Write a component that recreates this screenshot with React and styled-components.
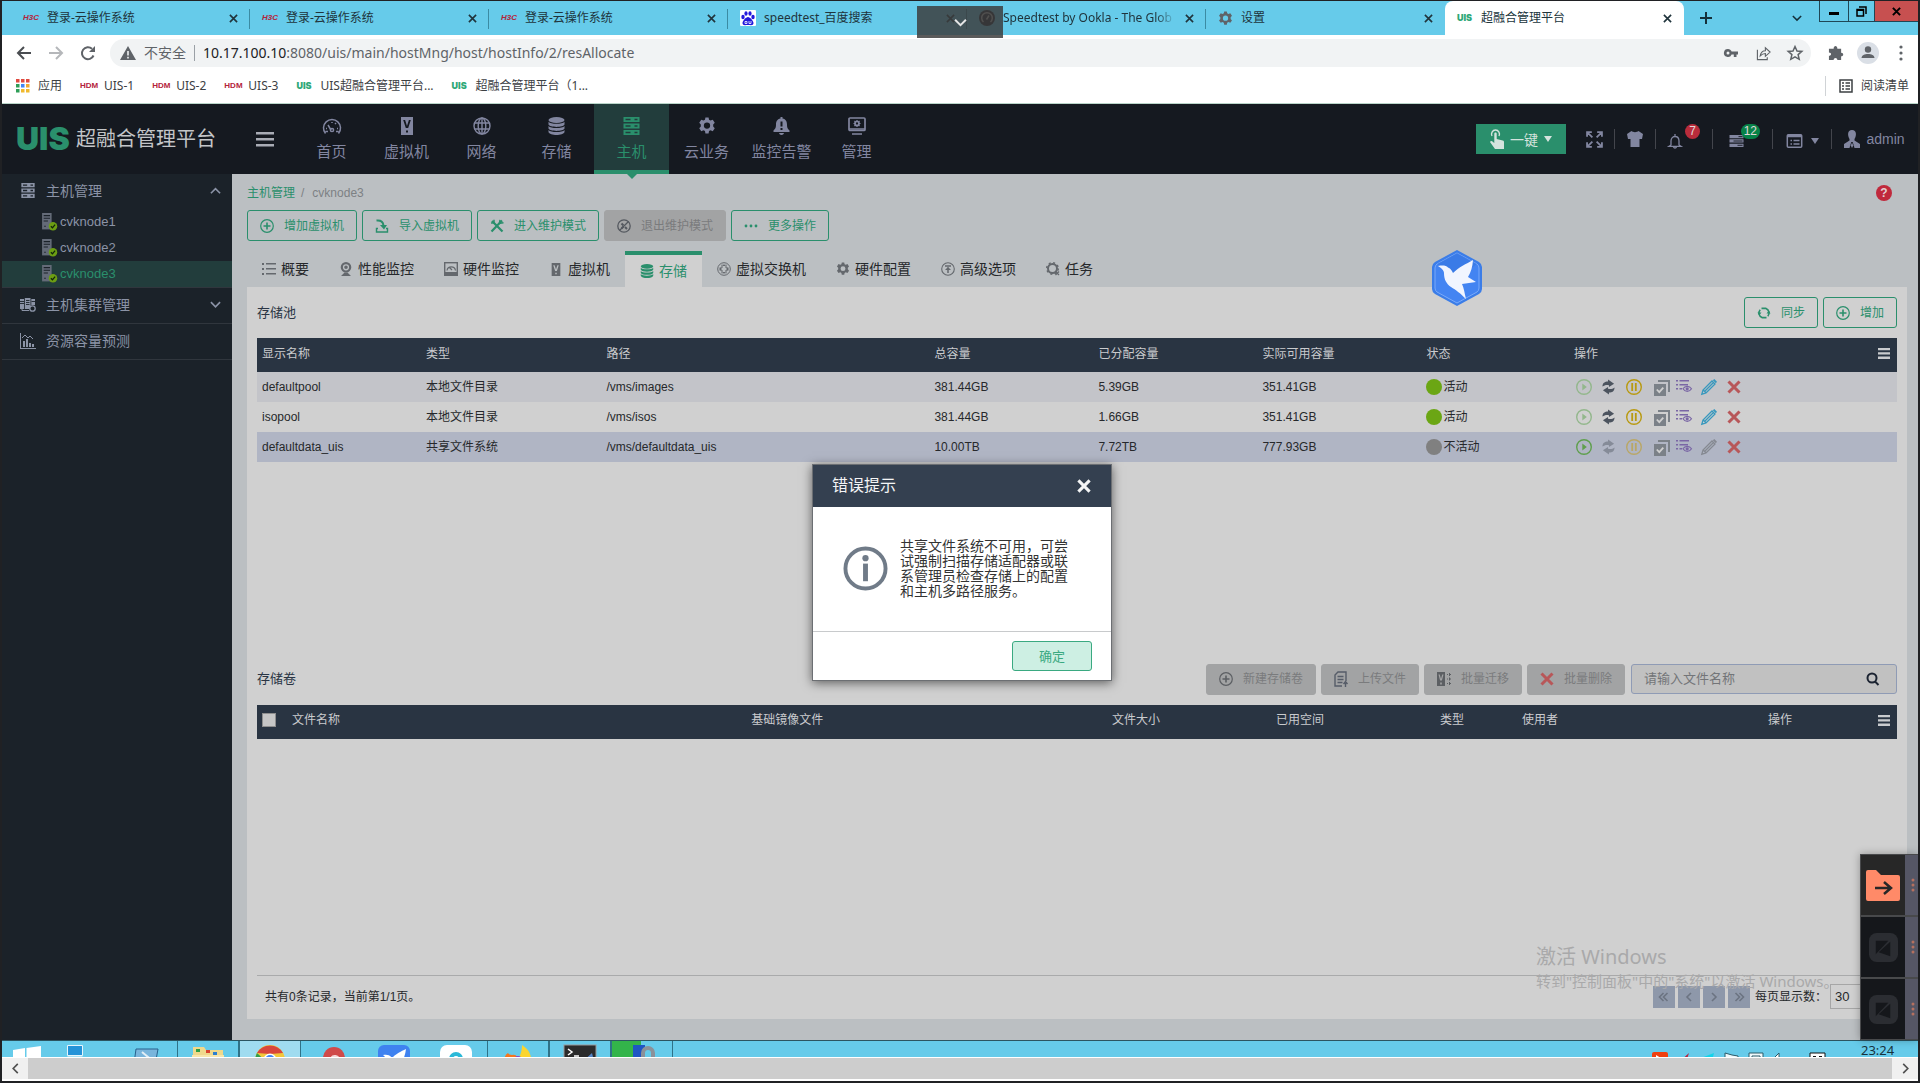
import React from "react";
import styled, { createGlobalStyle, css } from "styled-components";

const UI = `"Liberation Sans", "Noto Sans CJK SC", sans-serif`;
const CHROME = `"Noto Sans", "Noto Sans CJK SC", sans-serif`;
const GREEN = "#2a8f6c";

const Global = createGlobalStyle`
  *, *::before, *::after { box-sizing: border-box; }
  html, body { margin: 0; height: 100%; }
  body { background: #202124; font-family: ${UI}; font-size: 12px; overflow: hidden; }
  button, input, select { font: inherit; color: inherit; margin: 0; }
  button { background: none; border: 0; padding: 0; }
  a { color: inherit; text-decoration: none; }
`;

/* ---------- icons ---------- */
const Svg = styled.svg`
  width: ${p => p.$w || 16}px;
  height: ${p => p.$h || p.$w || 16}px;
  flex: none;
  display: block;
  overflow: visible;
  fill: currentColor;
  color: ${p => p.$c || "inherit"};
`;
const LineSvg = styled(Svg)`
  fill: none;
  stroke: currentColor;
  stroke-width: ${p => p.$sw || 1.3};
`;

const gearPath = "M6.6 0h2.8l.4 2 1.3.7 2-.8 1.8 2.6-1.4 1.6v1.8l1.4 1.6-1.8 2.6-2-.8-1.3.7-.4 2.2H6.6l-.4-2.2-1.3-.7-2 .8-1.8-2.6 1.4-1.6V6.1L1.1 4.5l1.8-2.6 2 .8L6.2 2z";
const Gear = p => (
  <Svg viewBox="0 0 16 15" {...p}><path fillRule="evenodd" d={gearPath + "M8 4.300a2.800 2.800 0 1 0 0 5.600a2.800 2.800 0 1 0 0-5.600z"} /></Svg>
);
const Gauge = p => (
  <LineSvg viewBox="0 0 20 18" $sw={1.5} {...p}>
    <path d="M3.500 16.500A8.500 8.500 0 1 1 16.500 16.500M6 14.500h-2.500M16.500 14.500h-2.500" />
    <path d="M9 13l-3-5M5 11.500H4M13 7l1-1M10 6V5M15 11.500h1" /><circle cx="10" cy="13" r="1.600" />
  </LineSvg>
);
const VHost = p => (
  <Svg viewBox="0 0 12 18" {...p}>
    <path fillRule="evenodd" d="M0 0h12v18H0zM2.200 3l2.600 8h2.400l2.600-8H7.900L6 9 4.100 3zM5 13.500h2v2H5z" />
  </Svg>
);
const Globe = p => (
  <LineSvg viewBox="0 0 18 18" $sw={1.4} {...p}>
    <circle cx="9" cy="9" r="8" /><ellipse cx="9" cy="9" rx="3.800" ry="8" /><path d="M9 1v16M1.600 6h14.800M1.600 12h14.800" />
  </LineSvg>
);
const Db = p => (
  <Svg viewBox="0 0 16 18" {...p}>
    <ellipse cx="8" cy="3" rx="8" ry="3" />
    <path d="M0 4.800c2 2.700 14 2.700 16 0v2.700c-1 3.200-15 3.200-16 0zM0 9c2 2.700 14 2.700 16 0v2.500c-1 3.200-15 3.200-16 0zM0 13c2 2.700 14 2.700 16 0v2c-1 4-15 4-16 0z" />
  </Svg>
);
const Servers = p => (
  <Svg viewBox="0 0 16 18" {...p}>
    <path fillRule="evenodd" d="M0 0h16v5H0zM2 1.700v1.600h5V1.700zM11 1.700v1.600h3V1.700zM0 6.500h16v5H0zM2 8.200v1.600h5V8.200zM11 8.200v1.600h3V8.200zM0 13h16v5H0zM2 14.700v1.600h5v-1.600zM11 14.700v1.600h3v-1.600z" />
  </Svg>
);
const Alarm = p => (
  <Svg viewBox="0 0 16 18" {...p}>
    <path fillRule="evenodd" d="M7 0h2v1.500c3.500.8 4.500 3 4.500 6 0 4 1.200 4.500 2.500 6V15H0v-1.500c1.300-1.500 2.500-2 2.500-6 0-3 1-5.200 4.500-6zM7 4.500v5h2v-5zM7 11v2h2v-2zM5.500 16h5c-.5 2.500-4.500 2.500-5 0z" />
  </Svg>
);
const MonitorGear = p => (
  <LineSvg viewBox="0 0 18 18" $sw={1.7} {...p}>
    <rect x="1" y="1" width="16" height="12.500" rx="1" /><path d="M4 17h10M1 12h16" /><circle cx="9" cy="6.500" r="2" /><path d="M9 3v1.500M9 8.500V10M5.500 6.500H7M11 6.500h1.500M6.500 4l1 1M11.500 9l-1-1M11.500 4l-1 1M6.500 9l1-1" strokeWidth="1.200" />
  </LineSvg>
);
const Close = p => <LineSvg viewBox="0 0 10 10" {...p} $sw={p.$sw || 1.8}><path d="M1 1l8 8M9 1L1 9" /></LineSvg>;
const Chevron = ({ up, left, right, ...p }) => (
  <LineSvg viewBox="0 0 12 12" $sw={1.8} {...p}>
    <path d={up ? "M1 9l5-5 5 5" : left ? "M8.500 1l-5 5 5 5" : right ? "M3.500 1l5 5-5 5" : "M1 3.500l5 5 5-5"} />
  </LineSvg>
);
const Bars = p => <Svg viewBox="0 0 18 14" {...p}><path d="M0 0h18v2.500H0zM0 6h18v2.500H0zM0 12h18v2.500H0z" /></Svg>;
const ColumnsIcon = p => <Svg viewBox="0 0 12 11" {...p}><path d="M0 0h12v2.300H0zM0 4.300h12v2.300H0zM0 8.600h12v2.300H0z" /></Svg>;
const PlusCircle = p => <LineSvg viewBox="0 0 14 14" $sw={1.2} {...p}><circle cx="7" cy="7" r="6.300" /><path d="M7 3.500v7M3.500 7h7" strokeWidth="1.600" /></LineSvg>;
const ImportIcon = p => (
  <LineSvg viewBox="0 0 14 14" $sw={1.4} {...p}>
    <path d="M3 9.500H1.500v3.500h11V9.500H11" /><path d="M1.500 1.500c4-.5 6.500 1 7 5" strokeWidth="2" /><path d="M5 6h7L9 10.500z" fill="currentColor" stroke="none" />
  </LineSvg>
);
const Tools = p => (
  <LineSvg viewBox="0 0 14 14" $sw={2.2} {...p}><path d="M2 2l10.500 10.500M12 1.500L1.500 12.500" /><path d="M10 .8l-.5 3.500 4-.5M1 4l3-.3V.8" strokeWidth="1.500" /></LineSvg>
);
const Forbid = p => (
  <LineSvg viewBox="0 0 14 14" $sw={1.3} {...p}><circle cx="7" cy="7" r="6.200" /><path d="M2.500 11.500l9-9" /><path d="M4.500 4.500l2 2M8 8l2 2M4.500 9.500l2-2" strokeWidth="2" /></LineSvg>
);
const Dots = p => <Svg viewBox="0 0 14 14" {...p}><circle cx="2" cy="7" r="1.400" /><circle cx="7" cy="7" r="1.400" /><circle cx="12" cy="7" r="1.400" /></Svg>;
const ListIcon = p => <Svg viewBox="0 0 14 14" {...p}><path d="M0 1h2v2H0zM4 1h10v1.600H4zM0 6h2v2H0zM4 6h10v1.600H4zM0 11h2v2H0zM4 11h10v1.600H4z" /></Svg>;
const Webcam = p => (
  <Svg viewBox="0 0 14 14" {...p}><path fillRule="evenodd" d="M7 0a5.300 5.300 0 1 1 0 10.600A5.300 5.300 0 0 1 7 0zM7 2.200a3.100 3.100 0 1 0 0 6.200A3.100 3.100 0 0 0 7 2.200z" /><path d="M7 3.500a1.800 1.800 0 1 1 0 3.600 1.800 1.800 0 0 1 0-3.600zM5.500 10.500h3L12 14H2z" /></Svg>
);
const HwMon = p => (
  <LineSvg viewBox="0 0 14 14" $sw={1.4} {...p}><rect x=".7" y=".7" width="12.600" height="12.600" /><path d="M0 11.500h14" strokeWidth="3" /><path d="M3 8.500a4.300 4.300 0 0 1 8.500 0M8 8L5 5" strokeWidth="1.200" /></LineSvg>
);
const SwitchIcon = p => (
  <LineSvg viewBox="0 0 14 14" $sw={1} {...p}><circle cx="7" cy="7" r="6.300" /><path d="M5 2.500v3.500H2.500M9 2.500v3.500h2.500M5 11.500V8H2.500M9 11.500V8h2.500" /><path d="M7 2l1.500 2h-3zM7 12l1.500-2h-3zM2 7l2-1.500v3zM12 7l-2-1.500v3z" fill="currentColor" stroke="none" /></LineSvg>
);
const TopCircle = p => (
  <LineSvg viewBox="0 0 14 14" $sw={1.1} {...p}><circle cx="7" cy="7" r="6.300" /><path d="M4 4h6M7 5.500V11" strokeWidth="1.500" /><path d="M4 8l3-3 3 3z" fill="currentColor" stroke="none" /></LineSvg>
);
const TaskGear = p => (
  <LineSvg viewBox="0 0 14 14" $sw={2} {...p}><circle cx="6.500" cy="6.500" r="4.500" /><circle cx="6.500" cy="6.500" r="5.800" strokeDasharray="2 2.550" strokeWidth="1.400" /><path d="M9 9l4 4M13 9.500L9.500 13" strokeWidth="1.200" /></LineSvg>
);
const SyncIcon = p => (
  <LineSvg viewBox="0 0 14 14" $sw={1.6} {...p}><path d="M10.800 10.300A5 5 0 0 0 9 2.400L4.500 2.400M3.200 3.700A5 5 0 0 0 5 11.600L9.500 11.600" /><path d="M.5 6.500h4L2.200 9.500zM13.500 7.500h-4L11.800 4.500z" fill="currentColor" stroke="none" /></LineSvg>
);
const Caret = p => <Svg viewBox="0 0 8 6" {...p}><path d="M0 0h8L4 6z" /></Svg>;
const Hand = p => (
  <LineSvg viewBox="0 0 14 20" $sw={1.4} {...p}>
    <path d="M2 7a4 4 0 1 1 7 0" /><path fill="currentColor" stroke="none" d="M4.300 4.500c0-1.500 2.400-1.500 2.400 0V10l6 1.500c1.300.4 1.300 1 1.300 2V20H5l-5-7c.5-1.200 2-1.300 3 0l1.300 1z" />
  </LineSvg>
);
const Expand = p => (
  <LineSvg viewBox="0 0 16 16" $sw={1.7} {...p}><path d="M1 5.500V1h4.500M1 1l5 5M10.500 1H15v4.500M15 1l-5 5M1 10.500V15h4.500M1 15l5-5M10.500 15H15v-4.500M15 15l-5-5" /></LineSvg>
);
const Shirt = p => <Svg viewBox="0 0 16 16" {...p}><path d="M4.500 0c1.500 1.500 5.500 1.500 7 0L16 3l-1 5h-2.500v8h-9V8H1L0 3z" /></Svg>;
const Bell = p => <LineSvg viewBox="0 0 14 15" $sw={1.3} {...p}><path d="M7 0v2M3 11V7c0-6 8-6 8 0v4l2 1.300H1zM5.500 13c.5 1.300 2.500 1.300 3 0" /></LineSvg>;
const TaskList = p => <Svg viewBox="0 0 14 12" {...p}><path d="M0 0h14v3.300H0zM0 4.300h14v3.300H0zM0 8.700h14V12H0z" /><path d="M9 1.600h4M4 6h9M8 10.300h5" stroke="#151920" strokeWidth=".9" /></Svg>;
const Calendar = p => (
  <LineSvg viewBox="0 0 16 14" $sw={1.5} {...p}><rect x=".8" y=".8" width="14.400" height="12.400" rx="1" /><path d="M1 2h14" strokeWidth="2.500" /><path d="M4 6.500h1.500M7 6.500h6M4 10h1.500M7 10h6" /></LineSvg>
);
const User = p => (
  <Svg viewBox="0 0 16 18" {...p}><path d="M8 0c5 0 4.500 6 2.500 9v1.500L16 14v4h-5.500L8.700 12H7.300L5.500 18H0v-4l5.500-3.500V9C3.500 6 3 0 8 0z" /><path d="M8 12.500l1.300 3L8 18l-1.300-2.500z" /></Svg>
);
const Node = p => (
  <Svg viewBox="0 0 14 17" {...p}>
    <path fill="#646b78" d="M0 0h9v15.500H0z" /><path stroke="#1b2229" strokeWidth="1" d="M1.500 2.500h6M1.500 5h6M1.500 7.500h4M2 12.500h1.500" />
    <circle cx="10.300" cy="12.500" r="4" fill="#6c9e13" /><path d="M8.300 12.500l1.500 1.500 2.500-3" fill="none" stroke="#12240c" strokeWidth="1.200" />
  </Svg>
);
const Cluster = p => (
  <Svg viewBox="0 0 16 14" {...p}><path d="M0 1h4v10H0zM4.800 0h5.700v11H4.800zM11.300 1H15v6h-3.700z" /><path stroke="#1b2229" strokeWidth=".9" d="M0 3.500h4M0 5.500h4M6 2.500h3.500M6 4.500h3.500M6 6.500h3.500M11.500 3.500H15" /><circle cx="12.500" cy="10.500" r="2.700" fill="#1b2229" stroke="currentColor" strokeWidth="1.300" /><path d="M2 11v1.500h7" fill="none" stroke="currentColor" /></Svg>
);
const ChartIcon = p => (
  <Svg viewBox="0 0 16 16" {...p}><path d="M0 0h1v15h15v1H0zM3 8h2v6H3zM6 6h2v8H6zM9 10h2v4H9zM12 11h2v3h-2z" /><path d="M2 5l3-3 3 3 2-2 3 3" fill="none" stroke="currentColor" /></Svg>
);
const Play = p => <LineSvg viewBox="0 0 16 16" $sw={1.4} {...p}><circle cx="8" cy="8" r="7.300" /><path d="M6.300 4.500l4.500 3.500-4.500 3.500z" fill="currentColor" stroke="none" /></LineSvg>;
const Refresh = p => <Svg viewBox="0 0 14 16" {...p}><path d="M.5 7.500C.5 3.500 3 2 6.500 2V0L13 4.500 7.500 8V6C4.500 5.500 2.500 6 .5 7.500zM13.500 8.500c0 4-2.500 5.500-6 5.500v2L1 11.500 6.500 8v2c3 .5 5 0 7-1.500z" /></Svg>;
const Pause = p => <LineSvg viewBox="0 0 16 16" $sw={1.4} {...p}><circle cx="8" cy="8" r="7.300" /><path d="M6.200 4v8M9.800 4v8" strokeWidth="1.800" /></LineSvg>;
const CheckCopy = p => <Svg viewBox="-3 -1 16 16" {...p}><path d="M4 0h12v12h-2V2H4zM0 4h12v12H0z" /><path d="M2.800 9.500l2.500 2.700 4-4.500" fill="none" stroke="#d0d0d0" strokeWidth="1.800" /></Svg>;
const ListEye = p => (
  <Svg viewBox="0 1 16 14" {...p}><path d="M0 1h2v1.600H0zM3.500 1H13v1.600H3.500zM0 5h2v1.600H0zM3.500 5H12v1.600H3.500zM0 9h2v1.600H0zM3.500 9H6v1.600H3.500z" /><path d="M7 9.800c2-3.300 6.500-3.300 8.500 0-2 3.300-6.500 3.300-8.500 0z" fill="none" stroke="currentColor" strokeWidth="1.200" /><circle cx="11.200" cy="9.800" r="1.600" /></Svg>
);
const Pencil = p => <LineSvg viewBox="0 0 16 16" $sw={1.3} {...p}><path d="M.8 15.200L2 11 11 2l3 3-9 9zM3.500 12.500L12.500 3.500M2.200 11l2.800 2.800" /><path d="M11.800 1.200L13.300 0 16 2.700l-1.200 1.500z" fill="currentColor" stroke="none" /></LineSvg>;
const XBold = p => <LineSvg viewBox="0 0 14 14" $sw={3} {...p}><path d="M1.500 1.500l11 11M12.500 1.500l-11 11" /></LineSvg>;
const FileUp = p => <LineSvg viewBox="0 0 14 16" $sw={1.4} {...p}><path d="M8 15H1V4l3-3h8v9M3.500 5.500h6M3.500 8.500h6M3.500 11.500h5" /><path d="M11.500 16v-4M9.500 13l2-2.500 2 2.500" /></LineSvg>;
const Migrate = p => <Svg viewBox="0 0 14 14" {...p}><path fillRule="evenodd" d="M0 0h8v14H0zM1.500 2.500l1.600 6h1.800l1.600-6H5.200L4 7 2.800 2.500zM3.200 10.500v2h1.600v-2z" /><path d="M10 2.500h1M12 2.500h2M10 7h1M12 7h2M10 11.500h1M12 11.500h2M12.500 1v3M12.500 5.500v3M12.500 10v3" fill="none" stroke="currentColor" /></Svg>;
const Search = p => <LineSvg viewBox="0 0 14 14" $sw={2} {...p}><circle cx="6" cy="6" r="4.500" /><path d="M9 9.500l3.500 3.500" /></LineSvg>;
const InfoIcon = p => <LineSvg viewBox="0 0 46 46" $sw={4} {...p}><circle cx="23" cy="23" r="20.500" /><path d="M23 18v18" strokeWidth="5" /><circle cx="23" cy="12.500" r="3.200" fill="currentColor" stroke="none" /></LineSvg>;
const PageArrow = ({ back, double }) => (
  <LineSvg viewBox="0 0 10 10" $w={10} $sw={1.6}>
    <path
      transform={back ? "matrix(-1 0 0 1 10 0)" : undefined}
      d={double ? "M1.500 1l4 4-4 4M5.500 1l4 4-4 4" : "M3 1l4 4-4 4"}
    />
  </LineSvg>
);

/* ---------- browser chrome ---------- */
const Frame = styled.div`
  height: 100vh;
  display: flex;
  flex-direction: column;
  border: 2px solid #202124;
  border-top-width: 1px;
  background: #fff;
  position: relative;
`;
const TabStrip = styled.div`
  height: 34px;
  flex: none;
  background: #66cbea;
  display: flex;
  padding-left: 9px;
  font-family: ${CHROME};
  position: relative;
`;
const BrowserTab = styled.div`
  width: 239px;
  display: flex;
  align-items: center;
  gap: 8px;
  padding: 0 12px;
  color: #20343c;
  line-height: 20px;
  position: relative;
  ${p => p.$active ? css`background: #fff; border-radius: 8px 8px 0 0;` : css`
    &::after { content: ""; position: absolute; right: 0; top: 8px; height: 20px; width: 1px; background: ${p.$last ? "none" : "#3b8ba3"}; }
  `}
`;
const TabTitle = styled.span`
  flex: 1;
  white-space: nowrap;
  overflow: hidden;
  ${p => p.$fade && css`mask-image: linear-gradient(90deg, #000 88%, transparent);`}
`;
const H3C = styled.span`
  width: 16px;
  flex: none;
  font: italic bold 8px/10px "Liberation Sans", sans-serif;
  color: #b4233b;
`;
const HDM = styled(H3C)`font-style: normal; white-space: nowrap;`;
const UisMark = styled.span`
  width: 16px;
  flex: none;
  font: 900 9px/12px Inter, sans-serif;
  color: #2fa878;
`;
const IconButton = styled.button`
  display: inline-flex;
  align-items: center;
  justify-content: center;
  width: ${p => p.$w || 16}px;
  height: ${p => p.$h || 16}px;
  flex: none;
  color: ${p => p.$c || "inherit"};
`;
const Spacer = styled.div`flex: 1;`;
const WinControls = styled.div`
  display: flex;
  height: 21px;
  margin-left: 10px;
  border: 1px solid #1f4756;
  border-width: 0 0 1px 1px;
`;
const WinButton = styled(IconButton)`
  width: ${p => p.$w}px;
  height: 20px;
  color: #000;
  background: ${p => p.$bg || "transparent"};
  & + & { border-left: 1px solid #1f4756; }
`;
const PullDown = styled.button`
  position: absolute;
  left: 915px;
  top: 5px;
  width: 86px;
  height: 32px;
  background: rgba(60, 60, 60, 0.84);
  color: #e6e6e6;
  display: flex;
  align-items: center;
  justify-content: center;
  z-index: 2;
`;
const AddressRow = styled.div`
  height: 36px;
  flex: none;
  display: flex;
  align-items: center;
  padding: 0 9px 0 14px;
  font-family: ${CHROME};
  color: #5f6368;
`;
const NavButtons = styled.div`display: flex; gap: 16px; margin-right: 14px;`;
const Omnibox = styled.div`
  flex: 1;
  height: 28px;
  border-radius: 14px;
  background: #f1f3f4;
  display: flex;
  align-items: center;
  padding: 0 8px 0 10px;
  gap: 8px;
  font-size: 14px;
  line-height: 20px;
`;
const Pipe = styled.span`
  width: 1px;
  height: ${p => p.$h || 16}px;
  background: ${p => p.$c || "#9aa0a6"};
  flex: none;
`;
const Url = styled.div`flex: 1; b { font-weight: 400; color: #202124; }`;
const OmniIcons = styled.div`display: flex; gap: 16px;`;
const RightIcons = styled(OmniIcons)`margin-left: 16px; align-items: center; gap: 14px;`;
const Bookmarks = styled.nav`
  height: 33px;
  flex: none;
  display: flex;
  align-items: center;
  padding: 0 0 3px 5px;
  font-family: ${CHROME};
  color: #3c4043;
  line-height: 20px;
  border-bottom: 1px solid #b9d5c9;
`;
const Bookmark = styled.a`display: flex; align-items: center; gap: 8px; padding: 0 9px;`;
const ReadingList = styled.button`display: flex; align-items: center; gap: 8px; padding: 0 9px 0 13px;`;

/* ---------- application shell ---------- */
const Page = styled.div`
  flex: 1;
  min-height: 0;
  display: flex;
  flex-direction: column;
  position: relative;
  background: #bbbfc2;
`;
const Header = styled.header`
  height: 70px;
  flex: none;
  background: #151920;
  display: flex;
  align-items: center;
  color: #8286a0;
`;
const Brand = styled.div`
  width: 254px;
  flex: none;
  display: flex;
  align-items: center;
  gap: 4px;
  padding-left: 14px;
  color: #c3c5c8;
  font-size: 20px;
  line-height: 28px;
  white-space: nowrap;
`;
const BrandMark = styled.span`
  width: 56px;
  font: 900 32px/32px Inter, sans-serif;
  color: ${GREEN};
`;
const MainNav = styled.nav`display: flex; height: 70px; margin-left: 20px;`;
const NavItem = styled.a`
  width: 75px;
  display: flex;
  flex-direction: column;
  align-items: center;
  gap: 8px;
  padding-top: 13px;
  font-size: 15px;
  line-height: 18px;
  position: relative;
  ${p => p.$active && css`
    background: #223d3c;
    color: ${GREEN};
    border-bottom: 4px solid ${GREEN};
    &::after {
      content: "";
      position: absolute;
      top: 69px;
      left: 32px;
      border: 6px solid transparent;
      border-top-color: ${GREEN};
      border-bottom: 0;
    }
  `}
`;
const OneKey = styled.button`
  width: 90px;
  height: 30px;
  background: ${GREEN};
  color: #d4e3dd;
  display: flex;
  align-items: center;
  justify-content: center;
  gap: 6px;
  font-size: 14px;
  margin-right: 8px;
`;
const Tool = styled.button`
  width: ${p => p.$w}px;
  height: 20px;
  display: flex;
  align-items: center;
  justify-content: ${p => (p.$pl ? "flex-start" : "center")};
  padding: ${p => (p.$pl ? `4px 0 0 ${p.$pl}px` : 0)};
  gap: ${p => p.$gap || 6}px;
  border-right: 1px solid ${p => (p.$last ? "transparent" : "#43454c")};
  font-size: 14px;
  position: relative;
`;
const Badge = styled.span`
  position: absolute;
  top: -5px;
  right: ${p => p.$right}px;
  min-width: 15px;
  height: 15px;
  padding: 0 3px;
  border-radius: 8px;
  background: ${p => p.$bg};
  color: #e0d6d8;
  font-size: 12px;
  line-height: 15px;
`;
const Body = styled.div`flex: 1; min-height: 0; display: flex;`;
const Sidebar = styled.aside`
  width: 230px;
  flex: none;
  background: #1b2229;
  color: #8b93a6;
`;
const Group = styled.div`border-bottom: 1px solid #30363d;`;
const GroupHead = styled.button`
  width: 100%;
  height: 35px;
  display: flex;
  align-items: center;
  gap: 10px;
  padding: 0 11px 2px 18px;
  font-size: 14px;
  line-height: 20px;
  text-align: left;
  span { flex: 1; }
`;
const Leaf = styled.a`
  height: 26px;
  display: flex;
  align-items: center;
  gap: 3px;
  padding-left: 40px;
  font-size: 13px;
  line-height: 26px;
  color: ${p => (p.$active ? GREEN : "inherit")};
  background: ${p => (p.$active ? "#223d3c" : "none")};
`;
const Content = styled.main`
  flex: 1;
  min-width: 0;
  padding: 10px 11px 21px 15px;
  display: flex;
  flex-direction: column;
  color: #26282b;
`;
const Crumbs = styled.nav`
  display: flex;
  gap: 6px;
  align-items: center;
  height: 18px;
  color: #7d8184;
  line-height: 18px;
  a { color: ${GREEN}; }
  span + span { margin-left: 2px; }
`;
const Help = styled.button`
  margin-left: auto;
  margin-right: 15px;
  width: 16px;
  height: 16px;
  border-radius: 8px;
  background: #c0293c;
  color: #e3cfd2;
  font-weight: 700;
  line-height: 16px;
`;
const ButtonRow = styled.div`
  display: flex;
  align-items: center;
  gap: 5px;
  margin-top: ${p => p.$mt || 0}px;
`;
const Btn = styled.button`
  height: 31px;
  display: inline-flex;
  align-items: center;
  gap: 10px;
  padding: 0 12px;
  border: 1px solid ${GREEN};
  border-radius: 3px;
  color: ${GREEN};
  font-size: 12px;
  line-height: 20px;
  white-space: nowrap;
  &:disabled { background: #a2a3a4; border-color: #a2a3a4; color: #7a7b7d; }
`;
const Tabs = styled.div`display: flex; margin-top: 10px; height: 36px;`;
const Tab = styled.button`
  display: flex;
  align-items: center;
  gap: 5px;
  padding: 0 15px;
  border-top: 4px solid transparent;
  font-size: 14px;
  line-height: 20px;
  padding-bottom: 4px;
  svg { color: #64686d; }
  ${p => p.$active && css`
    background: #d0d0d0;
    border-top-color: ${GREEN};
    color: ${GREEN};
    padding-bottom: 0;
    svg { color: ${GREEN}; }
  `}
`;
const Panel = styled.div`
  flex: 1;
  min-height: 0;
  background: #d0d0d0;
  padding: 10px;
  display: flex;
  flex-direction: column;
  gap: 10px;
`;
const Section = styled.section`
  flex: ${p => p.$grow} 1 0;
  min-height: 0;
  display: flex;
  flex-direction: column;
  gap: 10px;
`;
const Title = styled.h2`
  margin: 0;
  flex: 1;
  font-size: 13px;
  line-height: 20px;
  font-weight: 400;
  color: #2a3544;
`;
const Table = styled.table`
  width: 100%;
  table-layout: fixed;
  border-collapse: collapse;
  line-height: 18px;
  th {
    height: 34px;
    background: #293442;
    color: #c9cbce;
    font-weight: 400;
    text-align: left;
    padding: 0 7px 3px 5px;
  }
  td { height: 30px; padding: 0 5px; }
`;
const Row = styled.tr`background: ${p => p.$bg};`;
const LastHead = styled.div`
  display: flex;
  justify-content: space-between;
  align-items: center;
`;
const Status = styled.span`
  display: flex;
  align-items: center;
  gap: 1px;
  &::before { content: ""; width: 16px; height: 16px; border-radius: 8px; background: ${p => p.$c}; }
`;
const Ops = styled.div`display: flex; align-items: center; gap: 9px; padding-left: 2px;`;
const CheckBox = styled.input`
  appearance: none;
  display: block;
  width: 14px;
  height: 14px;
  background: #c6c6c6;
  border: 1px solid #8e8e8e;
`;
const SearchBox = styled.form`
  width: 266px;
  height: 30px;
  display: flex;
  align-items: center;
  border: 1px solid #8f9bb5;
  border-radius: 3px;
  background: #c1c1c1;
  padding: 0 15px 0 12px;
  margin-left: 1px;
  input { flex: 1; min-width: 0; border: 0; background: none; outline: 0; padding: 0; line-height: 20px; font-size: 13px; }
  input::placeholder { color: #737578; opacity: 1; }
`;
const Footer = styled.footer`
  margin-top: auto;
  border-top: 1px solid #a9aaab;
  height: 34px;
  display: flex;
  align-items: center;
  padding: 8px 0 0 8px;
  line-height: 20px;
  white-space: nowrap;
`;
const Pager = styled.div`
  margin-left: auto;
  display: flex;
  align-items: center;
  gap: 3px;
`;
const PageBtn = styled.button`
  width: 22px;
  height: 22px;
  background: #8e98aa;
  color: #6c7482;
  display: flex;
  align-items: center;
  justify-content: center;
`;
const SizeLabel = styled.label`display: flex; align-items: center; gap: 3px; padding-left: 2px;`;
const SizeSelect = styled.select`
  appearance: none;
  width: 67px;
  height: 25px;
  border: 1px solid #a6a6a6;
  background: #d0d0d0;
  padding: 0 4px;
  font-size: 13px;
`;

/* ---------- layers over the page ---------- */
const ModalLayer = styled.div`
  position: absolute;
  inset: 0;
  padding-left: 4px;
  display: flex;
  align-items: center;
  justify-content: center;
`;
const Dialog = styled.div`
  width: 300px;
  background: #fff;
  border: 1px solid #6c6f73;
  box-shadow: 0 2px 10px rgba(0, 0, 0, 0.55);
`;
const DialogHead = styled.div`
  height: 42px;
  background: #344050;
  color: #f4f5f6;
  display: flex;
  align-items: center;
  justify-content: space-between;
  padding: 0 19px;
  font-size: 16px;
  line-height: 24px;
`;
const DialogBody = styled.div`
  display: flex;
  gap: 12px;
  align-items: center;
  height: 124px;
  padding: 0 42px 0 30px;
  font-size: 14px;
  line-height: 15px;
  color: #333;
  p { margin: 0; width: 168px; flex: none; }
`;
const DialogFoot = styled.div`
  height: 49px;
  border-top: 1px solid #c8cacc;
  display: flex;
  align-items: center;
  justify-content: flex-end;
  padding-right: 19px;
`;
const OkButton = styled.button`
  width: 80px;
  height: 30px;
  border: 1px solid #3aa981;
  border-radius: 3px;
  background: #cdefe3;
  color: #3aa981;
  font-size: 13px;
`;
const Bird = styled.div`position: absolute; right: 436px; top: 146px;`;
const Watermark = styled.div`
  position: absolute;
  right: 79px;
  bottom: 49px;
  width: 303px;
  color: #a9a9aa;
  font-family: ${CHROME};
  font-size: 15px;
  line-height: 20px;
  white-space: nowrap;
  pointer-events: none;
  strong { display: block; font-weight: 400; font-size: 20px; line-height: 28px; }
`;
const Dock = styled.div`
  position: absolute;
  right: 0;
  bottom: 0;
  width: 58px;
  border: 1px solid #48494b;
  border-right: 0;
  box-shadow: 0 0 8px rgba(0, 0, 0, 0.3);
`;
const DockItem = styled.button`
  width: 100%;
  height: 60px;
  display: flex;
  background: ${p => p.$bg};
  & + & { border-top: 2px solid #48494b; height: 62px; }
  > span { flex: 1; align-self: stretch; display: flex; align-items: center; justify-content: center; }
  > i { width: 13px; align-self: stretch; background: #555665; display: flex; align-items: center; justify-content: center; }
`;

/* ---------- remote desktop bottom ---------- */
const TaskBar = styled.div`
  height: 17px;
  flex: none;
  overflow: hidden;
  background: #66cbea;
  border-top: 1px solid #2c5561;
  display: flex;
  color: #16323b;
`;
const TaskItem = styled.button`
  width: ${p => p.$w || 62}px;
  height: 40px;
  flex: none;
  display: flex;
  justify-content: center;
  margin-left: ${p => p.$ml || 0}px;
  padding-top: ${p => p.$pt || 4}px;
  border: 1px solid ${p => (p.$open ? "#2f7288" : "transparent")};
  border-top: 0;
  background: ${p => p.$bg || "none"};
`;
const Tray = styled.div`display: flex; gap: 8px; padding-top: 11px; margin-left: auto; margin-right: 35px;`;
const Clock = styled.time`width: 57px; font: 13px/18px ${CHROME};`;
const ScrollBar = styled.div`
  height: 24px;
  flex: none;
  display: flex;
  border: 1px solid #fff;
  border-width: 1px 0 2px;
  background: #cdcdcd;
  justify-content: space-between;
`;
const ScrollButton = styled(IconButton)`
  width: 26px;
  height: 21px;
  background: #f0f0f0;
  color: #505050;
`;

const browserTabs = [
  { icon: <H3C>H3C</H3C>, title: "登录-云操作系统" },
  { icon: <H3C>H3C</H3C>, title: "登录-云操作系统" },
  { icon: <H3C>H3C</H3C>, title: "登录-云操作系统" },
  {
    icon: (
      <Svg $w={16} viewBox="0 0 16 16"><rect width="16" height="16" rx="1" fill="#fff" /><g fill="#2319dc"><ellipse cx="3" cy="7" rx="1.700" ry="2.200" /><ellipse cx="6" cy="3.500" rx="1.600" ry="2.300" /><ellipse cx="10" cy="3.500" rx="1.600" ry="2.300" /><ellipse cx="13" cy="7" rx="1.700" ry="2.200" /><path d="M8 7c2 0 5.500 4 5.500 6 0 3-3 2-5.500 2s-5.500 1-5.500-2c0-2 3.500-6 5.500-6z" /></g><path d="M5 11.500h2v2H5zM9 11v2.500h2V11" fill="none" stroke="#fff" strokeWidth=".8" /></Svg>
    ),
    title: "speedtest_百度搜索",
  },
  {
    icon: <LineSvg $w={16} viewBox="0 0 16 16" $sw={1.5} $c="#b9b3ae"><circle cx="8" cy="8" r="8" fill="#1c1d26" stroke="none" /><path d="M4.500 12A5.300 5.300 0 1 1 11.500 12M7.500 9.500L10 5.500" /></LineSvg>,
    title: "Speedtest by Ookla - The Glob", fade: true,
  },
  { icon: <Gear $w={15} $h={15} $c="#5f6368" />, title: "设置", last: true },
  { icon: <UisMark>UIS</UisMark>, title: "超融合管理平台", active: true },
];

const navItems = [
  [<Gauge $w={20} $h={18} />, "首页"],
  [<VHost $w={12} $h={18} />, "虚拟机"],
  [<Globe $w={18} />, "网络"],
  [<Db $w={17} $h={18} />, "存储"],
  [<Servers $w={17} $h={18} />, "主机", true],
  [<Gear $w={18} $h={18} />, "云业务"],
  [<Alarm $w={17} $h={18} />, "监控告警"],
  [<MonitorGear $w={18} />, "管理"],
];

const hostTabs = [
  [<ListIcon $w={14} />, "概要"],
  [<Webcam $w={14} />, "性能监控"],
  [<HwMon $w={14} />, "硬件监控"],
  [<VHost $w={14} $h={13} />, "虚拟机"],
  [<Db $w={14} />, "存储", true],
  [<SwitchIcon $w={14} />, "虚拟交换机"],
  [<Gear $w={14} />, "硬件配置"],
  [<TopCircle $w={14} />, "高级选项"],
  [<TaskGear $w={14} />, "任务"],
];

const pools = [
  { name: "defaultpool", type: "本地文件目录", path: "/vms/images", total: "381.44GB", used: "5.39GB", free: "351.41GB", on: true, bg: "#c3c4c9" },
  { name: "isopool", type: "本地文件目录", path: "/vms/isos", total: "381.44GB", used: "1.66GB", free: "351.41GB", on: true, bg: "#d0d0d0" },
  { name: "defaultdata_uis", type: "共享文件系统", path: "/vms/defaultdata_uis", total: "10.00TB", used: "7.72TB", free: "777.93GB", on: false, bg: "#b0b5c4" },
];

function PoolOps({ on }) {
  return (
    <Ops>
      <IconButton aria-label="启动"><Play $c={on ? "#93b78c" : "#5f9f4d"} /></IconButton>
      <IconButton aria-label="刷新"><Refresh $w={13} $h={16} $c={on ? "#4c545f" : "#858b98"} /></IconButton>
      <IconButton aria-label="暂停"><Pause $c={on ? "#b89a10" : "#b9a766"} /></IconButton>
      <IconButton aria-label="检查"><CheckCopy $c="#7b8188" /></IconButton>
      <IconButton aria-label="查看"><ListEye $w={16} $h={14} $c="#7a66a5" /></IconButton>
      <IconButton aria-label="编辑"><Pencil $c={on ? "#3798bd" : "#858991"} /></IconButton>
      <IconButton aria-label="删除"><XBold $w={14} $c="#b85759" /></IconButton>
    </Ops>
  );
}

function BrowserChrome() {
  return (
    <>
      <TabStrip>
        {browserTabs.map((t, i) => (
          <BrowserTab key={i} $active={t.active} $last={t.last}>
            {t.icon}
            <TabTitle $fade={t.fade}>{t.title}</TabTitle>
            <IconButton aria-label="关闭标签页" $w={10}><Close $w={9} /></IconButton>
          </BrowserTab>
        ))}
        <IconButton aria-label="新标签页" $w={44} $h={34} $c="#14303a"><LineSvg viewBox="0 0 12 12" $w={12} $sw={2}><path d="M6 0v12M0 6h12" /></LineSvg></IconButton>
        <Spacer />
        <IconButton aria-label="搜索标签页" $w={24} $h={34} $c="#14303a"><Chevron $w={10} /></IconButton>
        <WinControls>
          <WinButton aria-label="最小化" $w={28}><Svg viewBox="0 0 10 3" $w={10} $h={3}><path d="M0 2h10v3H0z" /></Svg></WinButton>
          <WinButton aria-label="还原" $w={26}><LineSvg viewBox="0 0 11 11" $w={11} $sw={1.5}><path d="M1 3.500h6.500V10H1zM3 1h7v7" /><path d="M1 4h6" strokeWidth="2" /></LineSvg></WinButton>
          <WinButton aria-label="关闭" $w={44} $bg="#c75050"><Close $w={9} $sw={2.2} /></WinButton>
        </WinControls>
        <PullDown aria-label="展开工具栏"><Chevron $w={13} /></PullDown>
      </TabStrip>
      <AddressRow>
        <NavButtons>
          <IconButton aria-label="后退"><LineSvg viewBox="0 0 16 16" $w={16} $sw={2} $c="#4a4d51"><path d="M15 8H2M8 2L2 8l6 6" /></LineSvg></IconButton>
          <IconButton aria-label="前进"><LineSvg viewBox="0 0 16 16" $w={16} $sw={2} $c="#b5b7ba"><path d="M1 8h13M8 2l6 6-6 6" /></LineSvg></IconButton>
          <IconButton aria-label="重新加载"><LineSvg viewBox="0 0 16 16" $w={16} $sw={2}><path d="M13.500 10.500A6 6 0 1 1 12 3.800" /><path d="M15 1v6H9z" fill="currentColor" stroke="none" /></LineSvg></IconButton>
        </NavButtons>
        <Omnibox>
          <Svg viewBox="0 0 16 14" $w={16} $h={14}><path fillRule="evenodd" d="M8 0l8 14H0zM7.200 5v4.500h1.600V5zM7.200 10.800v1.700h1.600v-1.700z" /></Svg>
          <span>不安全</span>
          <Pipe />
          <Url><b>10.17.100.10</b>:8080/uis/main/hostMng/host/hostInfo/2/resAllocate</Url>
          <OmniIcons>
            <IconButton aria-label="密码"><Svg viewBox="0 0 14 8" $w={14} $h={8}><path fillRule="evenodd" d="M4 0c1.700 0 3 1 3.600 2.500H14v3h-1.500V8h-2.700V5.500H7.600A4 4 0 1 1 4 0zM4 2.500a1.500 1.500 0 1 0 0 3 1.500 1.500 0 0 0 0-3z" /></Svg></IconButton>
            <IconButton aria-label="分享"><LineSvg viewBox="0 0 16 16" $w={15} $sw={1.2}><path d="M1.500 4v10.500H12V12M4.500 10.500C5 7 7 5 10 5V2L15 6.500l-5 4.500V8C7.500 8 6 9 4.500 10.500z" /></LineSvg></IconButton>
            <IconButton aria-label="收藏"><LineSvg viewBox="0 0 16 16" $w={16} $sw={1.5}><path d="M8 1.500l2 4.500 4.800.4-3.700 3.200 1.100 4.700L8 11.800l-4.200 2.500 1.100-4.700L1.200 6.400 6 6z" /></LineSvg></IconButton>
          </OmniIcons>
        </Omnibox>
        <RightIcons>
          <IconButton aria-label="扩展程序"><Svg viewBox="0 0 16 16" $w={15}><path d="M6 3c0-4 4-4 4 0h4v4.200c3 0 3 3.800 0 3.800v4h-4c0-3-4-3-4 0H1v-4.500c3 0 3-3.500 0-3.500V3z" /></Svg></IconButton>
          <IconButton aria-label="用户" $w={22} $h={22}><Svg viewBox="0 0 22 22" $w={22}><circle cx="11" cy="11" r="11" fill="#dadfe6" /><circle cx="11" cy="7.500" r="3.200" /><path d="M4.500 16c0-5.500 13-5.500 13 0z" /></Svg></IconButton>
          <IconButton aria-label="菜单"><Svg viewBox="0 0 4 16" $w={4} $h={16}><circle cx="2" cy="2" r="1.600" /><circle cx="2" cy="8" r="1.600" /><circle cx="2" cy="14" r="1.600" /></Svg></IconButton>
        </RightIcons>
      </AddressRow>
      <Bookmarks>
        <Bookmark href="#apps">
          <Svg viewBox="0 0 14 14" $w={14}>
            {["#e04a3f", "#e04a3f", "#e04a3f", "#2e9e57", "#4285f4", "#f0a92e", "#2e9e57", "#f0b92e", "#f0b92e"].map((c, i) => (
              <rect key={i} x={(i % 3) * 5} y={Math.floor(i / 3) * 5} width="3.500" height="3.500" fill={c} />
            ))}
          </Svg>
          应用
        </Bookmark>
        {["UIS-1", "UIS-2", "UIS-3"].map(n => <Bookmark key={n} href={"#" + n}><HDM>HDM</HDM>{n}</Bookmark>)}
        <Bookmark href="#uis"><UisMark>UIS</UisMark>UIS超融合管理平台...</Bookmark>
        <Bookmark href="#uis1"><UisMark>UIS</UisMark>超融合管理平台（1...</Bookmark>
        <Spacer />
        <Pipe $c="#d0d3d6" $h={20} />
        <ReadingList>
          <LineSvg viewBox="0 0 14 14" $w={14} $sw={1.5}><path d="M1 1h12v12H1zM3 4h2M6.500 4H11M3 7h2M6.500 7H11M3 10h2M6.500 10H11" /></LineSvg>
          阅读清单
        </ReadingList>
      </Bookmarks>
    </>
  );
}

function AppHeader() {
  return (
    <Header>
      <Brand><BrandMark>UIS</BrandMark>超融合管理平台</Brand>
      <IconButton aria-label="折叠菜单" $w={18}><Bars $w={18} $h={14} $c="#a9acb5" /></IconButton>
      <MainNav>
        {navItems.map(([icon, label, active]) => <NavItem key={label} href={"#" + label} $active={active}>{icon}{label}</NavItem>)}
      </MainNav>
      <Spacer />
      <OneKey><Hand $w={14} $h={20} />一键<Caret $w={8} $h={6} /></OneKey>
      <Tool $w={41} aria-label="全屏"><Expand $w={17} /></Tool>
      <Tool $w={41} aria-label="主题"><Shirt $w={16} /></Tool>
      <Tool $w={57} $pl={12} aria-label="告警"><Bell $w={14} $h={15} /><Badge $right={12} $bg="#b92c3b">7</Badge></Tool>
      <Tool $w={60} $pl={16} aria-label="任务"><TaskList $w={15} $h={12} /><Badge $right={12} $bg="#078348">12</Badge></Tool>
      <Tool $w={59} $gap={8} $pl={13} aria-label="视图"><Calendar $w={17} $h={14} /><Caret $w={8} $h={6} /></Tool>
      <Tool $w={86} $last><User $w={16} $h={18} />admin</Tool>
    </Header>
  );
}

function SideNav() {
  return (
    <Sidebar>
      <Group>
        <GroupHead><Servers $w={16} $h={15} /><span>主机管理</span><Chevron up $w={11} /></GroupHead>
        {["cvknode1", "cvknode2", "cvknode3"].map(n => (
          <Leaf key={n} href={"#" + n} $active={n === "cvknode3"}><Node $w={15} $h={18} />{n}</Leaf>
        ))}
      </Group>
      <Group><GroupHead><Cluster $w={16} $h={14} /><span>主机集群管理</span><Chevron $w={11} /></GroupHead></Group>
      <Group><GroupHead><ChartIcon $w={16} /><span>资源容量预测</span></GroupHead></Group>
    </Sidebar>
  );
}

const ColumnSettings = () => (
  <IconButton aria-label="列设置" $w={12} $h={12}><ColumnsIcon $w={12} $h={11} /></IconButton>
);

function PoolSection() {
  return (
    <Section $grow={357}>
      <ButtonRow>
        <Title>存储池</Title>
        <Btn><SyncIcon $w={14} />同步</Btn>
        <Btn><PlusCircle $w={14} />增加</Btn>
      </ButtonRow>
      <Table>
        <colgroup>{[10, 11, 20, 10, 10, 10, 9, 20].map((w, i) => <col key={i} width={w + "%"} />)}</colgroup>
        <thead>
          <tr>
            {["显示名称", "类型", "路径", "总容量", "已分配容量", "实际可用容量", "状态"].map(h => <th key={h}>{h}</th>)}
            <th><LastHead>操作<ColumnSettings /></LastHead></th>
          </tr>
        </thead>
        <tbody>
          {pools.map(p => (
            <Row key={p.name} $bg={p.bg}>
              <td>{p.name}</td><td>{p.type}</td><td>{p.path}</td><td>{p.total}</td><td>{p.used}</td><td>{p.free}</td>
              <td><Status $c={p.on ? "#6ba614" : "#808080"}>{p.on ? "活动" : "不活动"}</Status></td>
              <td><PoolOps on={p.on} /></td>
            </Row>
          ))}
        </tbody>
      </Table>
    </Section>
  );
}

function VolumeSection() {
  return (
    <Section $grow={346}>
      <ButtonRow>
        <Title>存储卷</Title>
        <Btn disabled><PlusCircle $w={14} $c="#5c5f63" />新建存储卷</Btn>
        <Btn disabled><FileUp $w={14} $h={16} $c="#565c68" />上传文件</Btn>
        <Btn disabled><Migrate $w={14} $c="#5c5f63" />批量迁移</Btn>
        <Btn disabled><XBold $w={14} $c="#b85759" />批量删除</Btn>
        <SearchBox onSubmit={e => e.preventDefault()}>
          <input aria-label="文件名称" placeholder="请输入文件名称" />
          <IconButton aria-label="搜索" $c="#1c2432"><Search $w={14} /></IconButton>
        </SearchBox>
      </ButtonRow>
      <Table>
        <colgroup>
          <col width="30" /><col width="28%" /><col width="22%" /><col width="10%" /><col width="10%" /><col width="5%" /><col width="15%" /><col />
        </colgroup>
        <thead>
          <tr>
            <th><CheckBox type="checkbox" aria-label="全选" /></th>
            {["文件名称", "基础镜像文件", "文件大小", "已用空间", "类型", "使用者"].map(h => <th key={h}>{h}</th>)}
            <th><LastHead>操作<ColumnSettings /></LastHead></th>
          </tr>
        </thead>
      </Table>
      <Footer>
        共有0条记录，当前第1/1页。
        <Pager>
          <PageBtn aria-label="首页"><PageArrow back double /></PageBtn>
          <PageBtn aria-label="上一页"><PageArrow back /></PageBtn>
          <PageBtn aria-label="下一页"><PageArrow /></PageBtn>
          <PageBtn aria-label="末页"><PageArrow double /></PageBtn>
          <SizeLabel>每页显示数：<SizeSelect defaultValue="30"><option>30</option></SizeSelect></SizeLabel>
        </Pager>
      </Footer>
    </Section>
  );
}

const EmptyCard = () => (
  <Svg viewBox="0 0 30 30" $w={29}><rect width="30" height="30" rx="8" fill="#2b2d32" /><path d="M7 8v14l13-14zM22 9v15L10 20z" fill="#15171b" /></Svg>
);
const Grip = () => <Svg viewBox="0 0 4 14" $w={4} $h={14} $c="#b5705f"><circle cx="3" cy="2" r="1.500" /><circle cx="3" cy="7" r="1.500" /><circle cx="3" cy="12" r="1.500" /></Svg>;

function Overlays() {
  return (
    <>
      <Bird>
        <Svg viewBox="0 0 50 56" $w={50} $h={56}>
          <path d="M25 0l22 12q3 2 3 5v22q0 3-3 5L25 56 3 44q-3-2-3-5V17q0-3 3-5z" fill="#3b7de8" />
          <path d="M25 3l20 11q2 1.500 2 4v20q0 2.500-2 4L25 53 5 42q-2-1.500-2-4V18q0-2.500 2-4z" fill="#4384f2" stroke="#7aaafa" />
          <path d="M25 3l20 11-20 14L5 14z" fill="#3674df" opacity=".6" />
          <path d="M6 16c5-1 8-.5 10 1.500 3 1 4 3.500 5 5.500C27 17 34 14 41 10c-.5 7-2 12-5 17l8 5-14 2c2 4 2.500 9 4 15-6-6-10-9-15-12-5-3.500-7-8-7-14 0-3-3-5-6-7z" fill="#f1f5ff" />
        </Svg>
      </Bird>
      <Watermark><strong>激活 Windows</strong>转到"控制面板"中的"系统"以激活 Windows。</Watermark>
      <Dock>
        <DockItem $bg="#272727" aria-label="文件传输">
          <span><Svg viewBox="0 0 34 32" $w={34} $h={32}><path d="M2 1h8l5 5h17q2 0 2 2v22q0 2-2 2H2q-2 0-2-2V3q0-2 2-2z" fill="#ff8a68" /><path d="M9 19h15M18 13l7 6-7 6" fill="none" stroke="#272727" strokeWidth="2.500" /></Svg></span>
          <i><Grip /></i>
        </DockItem>
        <DockItem $bg="#15171b" aria-label="空位一"><span><EmptyCard /></span><i><Grip /></i></DockItem>
        <DockItem $bg="#15171b" aria-label="空位二"><span><EmptyCard /></span><i><Grip /></i></DockItem>
      </Dock>
      <ModalLayer>
        <Dialog role="dialog" aria-label="错误提示">
          <DialogHead>错误提示<IconButton aria-label="关闭"><Close $w={14} $sw={2.2} /></IconButton></DialogHead>
          <DialogBody>
            <InfoIcon $w={45} $c="#707b88" />
            <p>共享文件系统不可用，可尝试强制扫描存储适配器或联系管理员检查存储上的配置和主机多路径服务。</p>
          </DialogBody>
          <DialogFoot><OkButton>确定</OkButton></DialogFoot>
        </Dialog>
      </ModalLayer>
    </>
  );
}

function DesktopBar() {
  return (
    <TaskBar>
      <TaskItem $w={50} $pt={5} aria-label="开始"><Svg viewBox="0 0 28 28" $w={28} $c="#fff"><path d="M0 4l12-2v12H0zM13.500 2L28 0v14H13.500z" /></Svg></TaskItem>
      <TaskItem $w={46} aria-label="服务器管理器"><Svg viewBox="0 0 16 28" $w={16} $h={28}><path d="M.5.500h15v10H.5zM.5 12h15v14H.5z" fill="#2493d8" stroke="#e6f5fb" /></Svg></TaskItem>
      <TaskItem $ml={17} $pt={8} aria-label="终端"><Svg viewBox="0 0 26 22" $w={26} $h={22}><path d="M3 0h22l-4 22H0z" fill="#79b5dc" stroke="#28618c" /><path d="M9 3l6 5-6 5" fill="none" stroke="#e2eef6" strokeWidth="2" /></Svg></TaskItem>
      <TaskItem $open aria-label="资源管理器"><Svg viewBox="0 0 32 24" $w={32} $h={24}><path d="M1 2h11l2 3h17v19H1z" fill="#f0d98c" /><path d="M4 4h4v3H4z" fill="#2f9e44" /><path d="M14 5h4v3h-4z" fill="#d8432e" /><path d="M21 7h4v3h-4z" fill="#2c7fd0" /><path d="M0 10h32v14H0z" fill="#f7e6ac" /></Svg></TaskItem>
      <TaskItem $open $bg="#a0dcf0" aria-label="浏览器"><Svg viewBox="0 0 30 30" $w={30}><circle cx="15" cy="15" r="15" fill="#f3c73b" /><path d="M2 8a15 15 0 0 1 26 0L15 9z" fill="#d8453b" /><path d="M2 8a15 15 0 0 0 8 21l5-9z" fill="#2f9e50" /><circle cx="15" cy="15" r="6.500" fill="#fff" /><circle cx="15" cy="15" r="5" fill="#4285f4" /></Svg></TaskItem>
      <TaskItem $pt={6} aria-label="远程工具"><Svg viewBox="0 0 22 22" $w={22}><circle cx="13" cy="11" r="11" fill="#d04a4a" /><path d="M10 12a4 4 0 1 1 4 5" fill="none" stroke="#f4d7d7" strokeWidth="2" /></Svg></TaskItem>
      <TaskItem aria-label="下载工具"><Svg viewBox="0 0 32 32" $w={32}><rect width="32" height="32" rx="6" fill="#3f82f0" /><path d="M5 10c4-1 7 0 9 3 5-5 8-6 14-9-1 9-5 18-15 20-5-5-2-9-8-14z" fill="#fff" /></Svg></TaskItem>
      <TaskItem aria-label="云工具"><Svg viewBox="0 0 32 32" $w={32}><rect width="32" height="32" rx="7" fill="#fff" /><path d="M11 20v-6a5 5 0 0 1 10 0v6" fill="none" stroke="#2bb9d8" strokeWidth="4" /></Svg></TaskItem>
      <TaskItem $open aria-label="火狐"><Svg viewBox="0 0 30 28" $w={30} $h={28}><path d="M1 18q0-8 4-10 1 2 4 2 4-1 6 3l12 5z" fill="#f5761f" /><path d="M19 0c6 4 10 9 9 18L13 16c4-4 6-9 6-16z" fill="#fbd52d" /><circle cx="15" cy="16" r="5" fill="#8a3fd0" /></Svg></TaskItem>
      <TaskItem $open aria-label="命令行"><Svg viewBox="0 0 32 30" $w={32} $h={30}><rect width="32" height="30" fill="#2b2b2b" stroke="#999" /><path d="M4 4l4 3-4 3M10 11h5" fill="none" stroke="#fff" strokeWidth="1.500" /><path d="M17 18L28 8l2 8z" fill="#5484c6" /></Svg></TaskItem>
      <TaskItem $open $bg="linear-gradient(90deg, #33b44a 48%, transparent 48%)" aria-label="网络工具"><Svg viewBox="0 0 30 26" $w={30} $h={26}><path d="M6 0h12v18H6z" fill="#1e56c4" /><path d="M16 14V8a5 5 0 0 1 10 0v10" fill="none" stroke="#8b9199" strokeWidth="4" /></Svg></TaskItem>
      <Tray>
        <Svg viewBox="0 0 16 16" $w={16}><rect width="16" height="16" rx="2" fill="#f0400f" /><path d="M4 3l8 5-8 4z" fill="#fff" /></Svg>
        <Svg viewBox="0 0 16 16" $w={16}><path d="M3 10L13 1l-3 9z" fill="#b52442" /></Svg>
        <Svg viewBox="0 0 16 16" $w={16}><path d="M1 6L14 1l-3 12z" fill="#12d4ea" /></Svg>
        <Svg viewBox="0 0 16 16" $w={16}><path d="M1 1l7 2 6 1v9H1z" fill="#eef8fb" stroke="#2b5a68" /></Svg>
        <Svg viewBox="0 0 16 16" $w={16}><path d="M1 1h14v12H1zM4 4h8v5H4z" fill="#eef8fb" stroke="#2b5a68" /></Svg>
        <Svg viewBox="0 0 16 16" $w={16}><path d="M1 7l6-6v13z" fill="#fff" stroke="#2b5a68" /></Svg>
        <Svg viewBox="0 0 30 16" $w={30} $h={16}><path d="M14 1h15v14H14z" fill="#fff" stroke="#111" /><path d="M17 4h3v3h-3zM23 4h3v3h-3z" fill="#111" /></Svg>
      </Tray>
      <Clock>23:24</Clock>
    </TaskBar>
  );
}

export default function App() {
  return (
    <Frame>
      <Global />
      <BrowserChrome />
      <Page>
        <AppHeader />
        <Body>
          <SideNav />
          <Content>
            <Crumbs><a href="#hosts">主机管理</a><span>/</span><span>cvknode3</span><Help aria-label="帮助">?</Help></Crumbs>
            <ButtonRow $mt={8}>
              <Btn><PlusCircle $w={14} />增加虚拟机</Btn>
              <Btn><ImportIcon $w={14} />导入虚拟机</Btn>
              <Btn><Tools $w={14} />进入维护模式</Btn>
              <Btn disabled><Forbid $w={14} $c="#54585f" />退出维护模式</Btn>
              <Btn><Dots $w={14} />更多操作</Btn>
            </ButtonRow>
            <Tabs role="tablist">
              {hostTabs.map(([icon, label, active]) => (
                <Tab key={label} role="tab" aria-selected={!!active} $active={active}>{icon}{label}</Tab>
              ))}
            </Tabs>
            <Panel>
              <PoolSection />
              <VolumeSection />
            </Panel>
          </Content>
        </Body>
        <Overlays />
      </Page>
      <DesktopBar />
      <ScrollBar>
        <ScrollButton aria-label="向左滚动"><Chevron left $w={11} /></ScrollButton>
        <ScrollButton aria-label="向右滚动"><Chevron right $w={11} /></ScrollButton>
      </ScrollBar>
    </Frame>
  );
}
